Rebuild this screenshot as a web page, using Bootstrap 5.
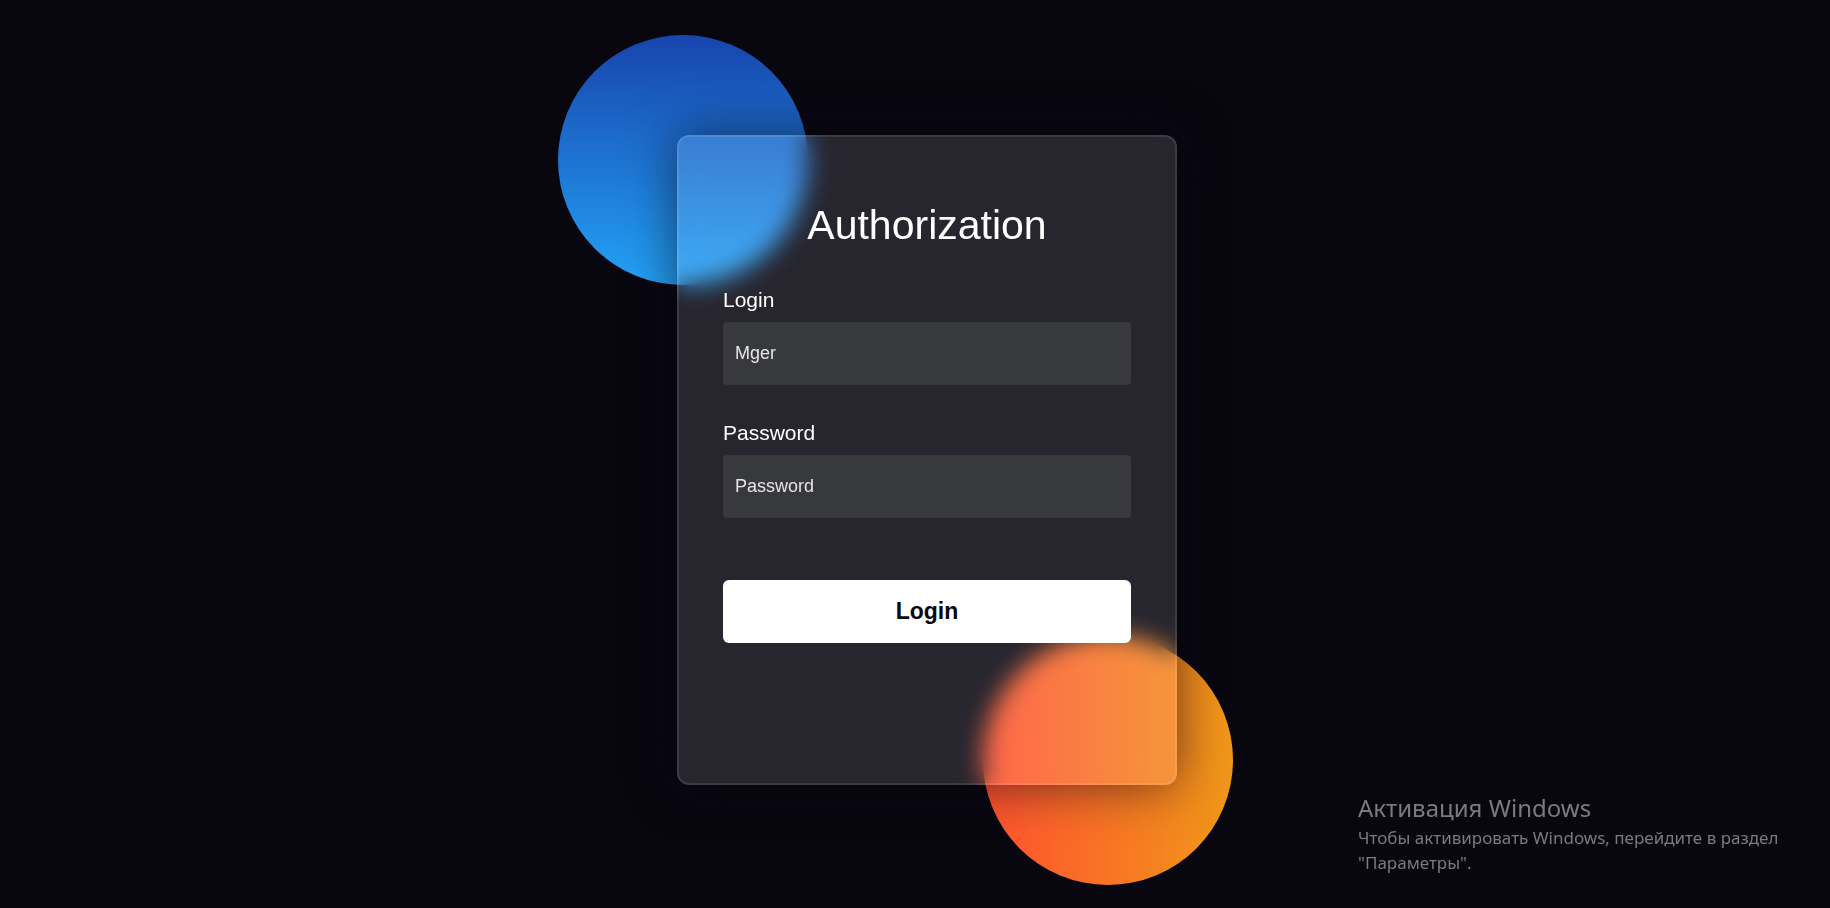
<!DOCTYPE html>
<html lang="en">
<head>
<meta charset="utf-8">
<meta name="viewport" content="width=device-width, initial-scale=1">
<title>Authorization</title>
<link rel="stylesheet" href="https://cdn.jsdelivr.net/npm/bootstrap@5.3.0/dist/css/bootstrap.min.css">
<style>
  body { background: #080710; font-family: "Liberation Sans", Arial, sans-serif; }
  .stage { padding: 12px 0 0 24px; }
  .auth-wrap { width: 100%; max-width: 500px; }
  .orb { width: 250px; height: 250px; }
  /* the orbs lie behind the glass card and stick out past its corners */
  .orb-blue { top: -100px; left: -119px; background: linear-gradient(#1845ad, #23a2f6); }
  .orb-orange { right: -56px; bottom: -100px; background: linear-gradient(to right, #ff512f, #f09819); }
  .glass {
    min-height: 650px;
    padding: 62px 44px;
    color: #fff;
    background-color: rgba(255, 248, 255, .13);
    border: 2px solid rgba(255, 255, 255, .1);
    border-radius: 12px;
    backdrop-filter: blur(12px);
    box-shadow: 0 0 50px rgba(8, 7, 16, .6);
  }
  .auth-title { font-size: 41px; line-height: 53px; font-weight: 500; }
  .field { margin-top: 36px; }
  .field .form-label { font-size: 21px; line-height: 24px; margin-bottom: 10px; font-weight: 500; }
  .field .form-control {
    height: 63px;
    padding: 0 12px;
    font-size: 18px;
    color: #e5e5e5;
    background-color: #38393c;
    border: 0;
    border-radius: 4px;
  }
  .field .form-control::placeholder { color: #e5e5e5; opacity: 1; }
  .btn-login {
    height: 63px;
    margin-top: 62px;
    font-size: 23px;
    font-weight: 600;
    color: #080710;
    border-radius: 6px;
  }
  .watermark {
    right: 24px; bottom: 33px; width: 448px;
    font-family: "Noto Sans", sans-serif;
    font-size: 17px; line-height: 25px; color: #7b7a7e;
  }
  .watermark-title { font-size: 24px; line-height: 34px; }
</style>
</head>
<body>
<main class="stage min-vh-100 d-flex align-items-center justify-content-center">
  <div class="auth-wrap position-relative">
    <div class="orb orb-blue rounded-circle position-absolute"></div>
    <div class="orb orb-orange rounded-circle position-absolute"></div>
    <form class="glass position-relative">
      <h1 class="auth-title text-center mb-0">Authorization</h1>
      <div class="field">
        <label class="form-label d-block" for="login">Login</label>
        <input class="form-control" id="login" type="text" placeholder="Mger">
      </div>
      <div class="field">
        <label class="form-label d-block" for="password">Password</label>
        <input class="form-control" id="password" type="password" placeholder="Password">
      </div>
      <button class="btn btn-light bg-white border-0 w-100 btn-login" type="submit">Login</button>
    </form>
  </div>
</main>
<aside class="watermark position-fixed">
  <div class="watermark-title">Активация Windows</div>
  <div>Чтобы активировать Windows, перейдите в раздел "Параметры".</div>
</aside>
<script src="https://cdn.jsdelivr.net/npm/bootstrap@5.3.0/dist/js/bootstrap.bundle.min.js"></script>
</body>
</html>
